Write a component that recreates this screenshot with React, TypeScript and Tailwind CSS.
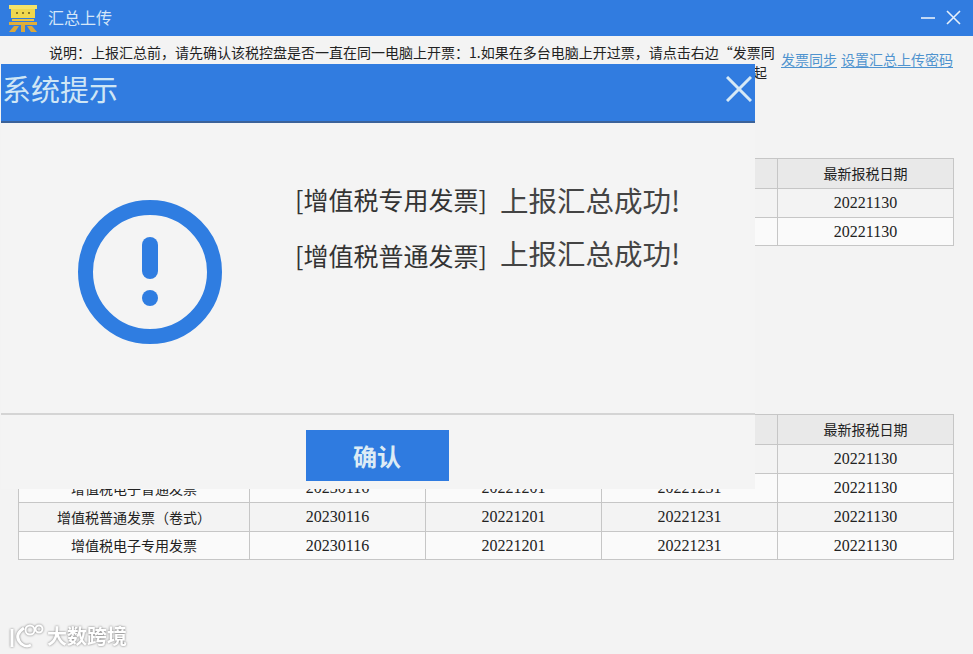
const sans = "font-['Noto_Sans_CJK_SC','Liberation_Sans',sans-serif]";
const serif = "font-['Liberation_Serif','Noto_Sans_CJK_SC',serif]";

const Table = ({ rows }: { rows: string[][] }) => (
  <table className="w-[935px] table-fixed border-collapse text-[14px] text-[#222]">
    <colgroup>
      <col className="w-[231px]" />
      <col className="w-[176px]" />
      <col className="w-[176px]" />
      <col className="w-[176px]" />
      <col className="w-[176px]" />
    </colgroup>
    <thead>
      <tr className="h-[30px] bg-[#e9e9e9]">
        <th className="border border-[#c6c6c6]" />
        <th className="border border-[#c6c6c6]" />
        <th className="border border-[#c6c6c6]" />
        <th className="border border-[#c6c6c6]" />
        <th className="border border-[#c6c6c6] font-normal">最新报税日期</th>
      </tr>
    </thead>
    <tbody>
      {rows.map((row, i) => (
        <tr
          key={i}
          className={
            i === rows.length - 1
              ? i % 2 === 0
                ? "h-[28px] bg-[#f3f3f3]"
                : "h-[28px] bg-[#fafafa]"
              : i % 2 === 0
                ? "h-[29px] bg-[#f3f3f3]"
                : "h-[29px] bg-[#fafafa]"
          }
        >
          {row.map((cell, j) => (
            <td key={j} className={j === 0 ? "border border-[#c6c6c6] text-center" : `border border-[#c6c6c6] text-center text-[16px] leading-[20px] ${serif}`}>
              {cell}
            </td>
          ))}
        </tr>
      ))}
    </tbody>
  </table>
);

const Logo = () => (
  <svg width="28" height="28" viewBox="0 0 28 28">
    <rect x="0" y="1" width="28" height="4" fill="#f4e36a" />
    <rect x="2" y="5" width="24" height="9" fill="#f0d84e" />
    <rect x="7" y="8" width="2" height="2" fill="#8a7a2a" />
    <rect x="13" y="8" width="2" height="2" fill="#8a7a2a" />
    <rect x="19" y="8" width="2" height="2" fill="#8a7a2a" />
    <rect x="3" y="15" width="22" height="2" fill="#e8c244" />
    <rect x="0" y="18" width="28" height="3" fill="#dfae3a" />
    <rect x="12" y="21" width="4" height="7" fill="#dba83a" />
    <polygon points="5,22 10,22 6,28 0,28" fill="#dba83a" />
    <polygon points="18,22 23,22 28,28 22,28" fill="#dba83a" />
  </svg>
);

export default function App() {
  return (
    <div className={`relative h-[654px] w-[973px] overflow-hidden bg-[#f3f3f3] ${sans}`}>
      {/* 标题栏 */}
      <div className="flex h-9 items-center bg-[#317ce0] pl-[9px] pr-[12px]">
        <Logo />
        <span className="mb-[3px] ml-[11px] text-[16px] text-[#d5e6f8]">汇总上传</span>
        <svg className="ml-auto" width="40" height="16" viewBox="0 0 40 16" fill="none" stroke="#e6f0fa" strokeWidth="1.6">
          <path d="M0 8h14" />
          <path d="M26 1l13 13M39 1L26 14" />
        </svg>
      </div>

      {/* 说明 */}
      <div className="flex pl-[49px] pt-[6px]">
        <div className="w-[727px] text-[14px] leading-[20px] text-[#222]">
          <div className="whitespace-nowrap">说明：上报汇总前，请先确认该税控盘是否一直在同一电脑上开票：1.如果在多台电脑上开过票，请点击右边“发票同</div>
          <div className="pr-[9px] text-right">起</div>
        </div>
        <div className="ml-[5px] flex items-start gap-[4px] pt-[9px] text-[14px] leading-[16px] text-[#4f93cf]">
          <span className="border-b border-[#4f93cf]">发票同步</span>
          <span className="border-b border-[#4f93cf]">设置汇总上传密码</span>
        </div>
      </div>

      {/* 表格 */}
      <div className="mt-[76px] pl-[18px]">
        <Table
          rows={[
            ["", "", "", "", "20221130"],
            ["", "", "", "", "20221130"],
          ]}
        />
      </div>
      <div className="mt-[168px] pl-[18px]">
        <Table
          rows={[
            ["", "", "", "", "20221130"],
            ["增值税电子普通发票", "20230116", "20221201", "20221231", "20221130"],
            ["增值税普通发票（卷式）", "20230116", "20221201", "20221231", "20221130"],
            ["增值税电子专用发票", "20230116", "20221201", "20221231", "20221130"],
          ]}
        />
      </div>

      {/* 系统提示 弹窗 */}
      <div className="absolute left-[1px] top-[64px] flex h-[425px] w-[754px] flex-col bg-[#f4f4f4]">
        <div className="flex h-[59px] items-center justify-between border-b-2 border-[#3b6299] bg-[#317ce0] pl-[1px] pr-[3px]">
          <span className="mb-[9px] text-[29px] leading-[44px] text-[#cfe6f5]">系统提示</span>
          <svg width="26" height="26" viewBox="0 0 26 26" fill="none" stroke="#d6e9f6" strokeWidth="3" className="mb-[8px]">
            <path d="M1 1l24 24M25 1L1 25" />
          </svg>
        </div>
        <div className="flex h-[292px] border-b-2 border-[#d4d4d4]">
          <svg className="ml-[77px] mt-[77px]" width="144" height="144" viewBox="0 0 144 144" fill="none">
            <circle cx="72" cy="72" r="64.5" stroke="#2f7de1" strokeWidth="15" />
            <rect x="64" y="37" width="16" height="42" rx="8" fill="#2f7de1" />
            <circle cx="72" cy="98" r="8" fill="#2f7de1" />
          </svg>
          <div className="ml-[73px] mt-[59px] flex flex-col gap-[18px] text-[#333]">
            <div className="flex items-center">
              <span className="w-[205px] text-[25px] leading-[35px]">[增值税专用发票]</span>
              <span className="text-[28.5px] leading-[35px] text-[#444]">上报汇总成功!</span>
            </div>
            <div className="flex items-center">
              <span className="w-[205px] text-[25px] leading-[35px]">[增值税普通发票]</span>
              <span className="mb-[5px] text-[28.5px] leading-[35px] text-[#444]">上报汇总成功!</span>
            </div>
          </div>
        </div>
        <div className="flex justify-center pr-[2px] pt-[15px]">
          <button className="h-[51px] w-[143px] bg-[#2f7be0] text-[24px] font-bold text-[#dcebf5]">确认</button>
        </div>
      </div>

      {/* 水印 */}
      <div className="absolute left-[9px] top-[622px] flex items-center gap-[3px] [filter:drop-shadow(0_0_1px_#777777)]">
        <svg width="35" height="28" viewBox="0 0 35 28" fill="none" stroke="#ffffff" strokeWidth="3">
          <path d="M3 7v18" />
          <path d="M15 6c-6 4-8 8-5 13s8 6 12 4" />
          <circle cx="21" cy="8" r="4.5" strokeWidth="2" />
          <circle cx="30" cy="7" r="3.5" strokeWidth="2" />
        </svg>
        <span className="text-[20px] leading-[28px] font-bold text-white">大数跨境</span>
      </div>
    </div>
  );
}
